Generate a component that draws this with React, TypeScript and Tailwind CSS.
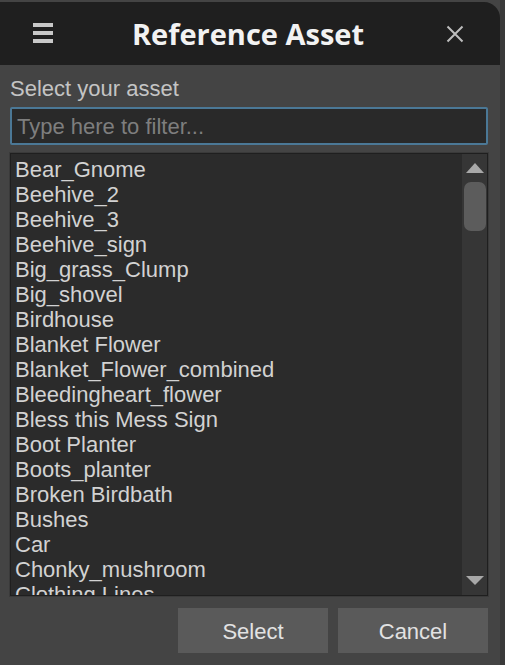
import React from "react";

const items = [
  "Bear_Gnome",
  "Beehive_2",
  "Beehive_3",
  "Beehive_sign",
  "Big_grass_Clump",
  "Big_shovel",
  "Birdhouse",
  "Blanket Flower",
  "Blanket_Flower_combined",
  "Bleedingheart_flower",
  "Bless this Mess Sign",
  "Boot Planter",
  "Boots_planter",
  "Broken Birdbath",
  "Bushes",
  "Car",
  "Chonky_mushroom",
  "Clothing Lines",
];

export default function App() {
  return (
    <div className="w-[505px] h-[665px] bg-[#3a3a3a] flex overflow-hidden font-['Liberation_Sans',Arial,sans-serif]">
      <div className="w-[500px] h-[665px] flex flex-col bg-[#444444]">
        {/* Title bar */}
        <div className="h-[63px] mt-[2px] shrink-0 bg-[#1f1f1f] rounded-tr-[16px] flex items-center relative">
          <div className="absolute left-[33px] top-[21px] flex flex-col gap-[4px]">
            <div className="w-[20px] h-[4px] bg-[#c8c8c8]" />
            <div className="w-[20px] h-[4px] bg-[#c8c8c8]" />
            <div className="w-[20px] h-[4px] bg-[#c8c8c8]" />
          </div>
          <div className="flex-1 text-center text-[29px] font-bold text-[#f2f2f2] font-['Open_Sans','Noto_Sans',sans-serif] pr-[4px] pb-[1px] leading-none">
            Reference Asset
          </div>
          <svg
            className="absolute left-[446px] top-[23px]"
            width="18"
            height="18"
            viewBox="0 0 18 18"
          >
            <path d="M1.5 1.5 L16.5 16.5 M16.5 1.5 L1.5 16.5" stroke="#bdbdbd" strokeWidth="2" />
          </svg>
        </div>

        {/* Body */}
        <div className="flex flex-col px-[10px] pr-[12px]">
          <div className="h-[42px] flex items-end pb-[7px] text-[22px] leading-none text-[#c4c4c4]">
            Select your asset
          </div>
          <div className="h-[38px] border-2 border-[#4b7896] rounded-[2px] bg-[#292929] flex items-center px-[5px] text-[22px] text-[#7e7e7e]">
            Type here to filter...
          </div>
          <div className="mt-[8px] h-[443px] border border-[#1f1f1f] outline outline-1 outline-[#3a3a3a] bg-[#2b2b2b] flex overflow-hidden">
            <div className="flex-1 pt-[3px] pl-[4px] overflow-hidden">
              {items.map((it) => (
                <div key={it} className="h-[25px] leading-[25px] text-[22px] text-[#d2d2d2] whitespace-nowrap">
                  {it}
                </div>
              ))}
            </div>
            <div className="w-[25px] bg-[#363636] flex flex-col items-center pt-[9px] pb-[10px]">
              <svg width="18" height="10" viewBox="0 0 18 10">
                <path d="M0 10 L9 0 L18 10 Z" fill="#a8a8a8" />
              </svg>
              <div className="mt-[9px] w-[22px] h-[49px] rounded-[7px] bg-[#5c5c5c]" />
              <div className="flex-1" />
              <svg width="18" height="9" viewBox="0 0 18 9">
                <path d="M0 0 L18 0 L9 9 Z" fill="#a8a8a8" />
              </svg>
            </div>
          </div>
          <div className="mt-[12px] flex justify-end gap-[10px]">
            <div className="w-[150px] h-[45px] bg-[#5a5a5a] flex items-center justify-center pt-[1px] text-[22px] text-[#e2e2e2]">
              Select
            </div>
            <div className="w-[150px] h-[45px] bg-[#5a5a5a] flex items-center justify-center pt-[1px] text-[22px] text-[#e2e2e2]">
              Cancel
            </div>
          </div>
        </div>
      </div>
    </div>
  );
}
